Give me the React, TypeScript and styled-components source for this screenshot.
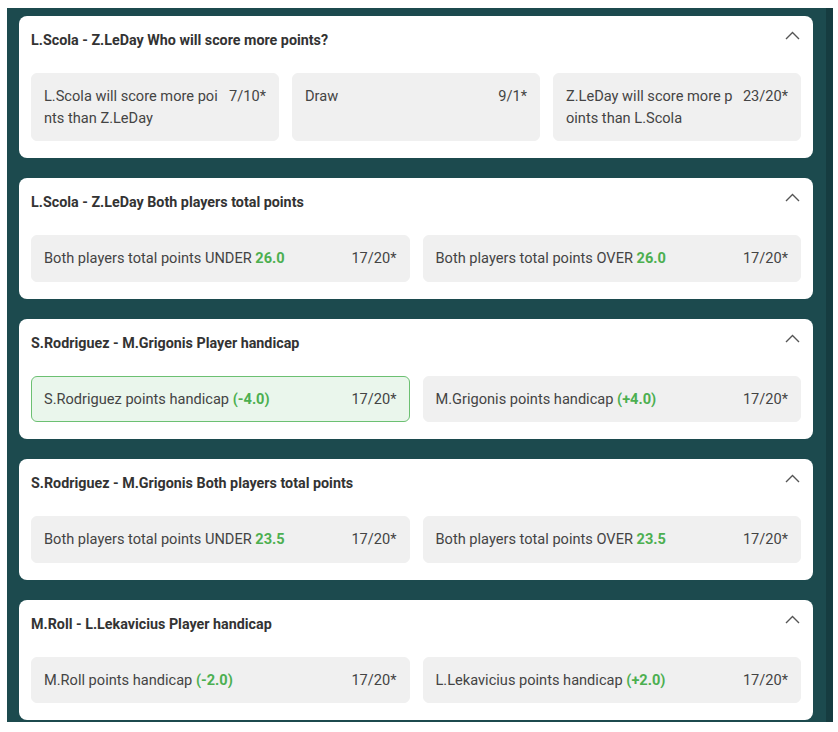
import React from 'react';
import styled, { createGlobalStyle } from 'styled-components';

// Types
interface Outcome {
  label: string;
  highlight?: string;
  odds: string;
  selected?: boolean;
}

interface Market {
  id: string;
  title: string;
  outcomes: Outcome[];
}

// Global
const GlobalStyle = createGlobalStyle`
  html, body {
    margin: 0;
    padding: 0;
    background: #ffffff;
    font-family: Roboto, "Liberation Sans", Arial, sans-serif;
  }
  * {
    box-sizing: border-box;
  }
`;

// Styled Components
const Page = styled.div`
  padding: 8px 5px 0 7px;
`;

const Panel = styled.div`
  display: flex;
  height: 714px;
  background-color: #1c4a4e;
  overflow: hidden;
`;

const MarketList = styled.div`
  flex: 1;
  display: flex;
  flex-direction: column;
  gap: 20px;
  padding: 8px 13px 0 12px;
`;

const ScrollTrack = styled.div`
  width: 7px;
  flex-shrink: 0;
  background-color: #163c40;
`;

const Card = styled.section`
  background-color: #ffffff;
  border-radius: 8px;
  padding: 0 12px 17px;
  flex-shrink: 0;
`;

const CardHeader = styled.header`
  display: flex;
  justify-content: space-between;
  align-items: flex-start;
  height: 57px;
  padding-top: 14px;
`;

const CardTitle = styled.h3`
  margin: 0;
  font-size: 14.3px;
  line-height: 20px;
  font-weight: 700;
  color: #333333;
`;

const Chevron = styled.svg`
  margin: 1px 1px 0 0;
  flex-shrink: 0;
`;

const OutcomeGrid = styled.div<{ $cols: number }>`
  display: grid;
  grid-template-columns: repeat(${p => p.$cols}, 1fr);
  gap: 13px;
`;

const OutcomeButton = styled.button<{ $selected?: boolean }>`
  display: flex;
  align-items: flex-start;
  gap: 10px;
  padding: 12px 12px 11px;
  border-radius: 6px;
  border: 1px solid ${p => (p.$selected ? '#6cc072' : '#f0f0f0')};
  background-color: ${p => (p.$selected ? '#eaf6ec' : '#f0f0f0')};
  font-family: inherit;
  font-size: 14.6px;
  line-height: 21.5px;
  color: #444444;
  text-align: left;
  cursor: pointer;
`;

const OutcomeLabel = styled.span`
  flex: 1;
  min-width: 0;
  word-break: break-all;
`;

const Highlight = styled.span`
  color: #4caf50;
  font-weight: 700;
`;

const Odds = styled.span`
  flex-shrink: 0;
  white-space: nowrap;
`;

const markets: Market[] = [
  {
    id: 'm1',
    title: 'L.Scola - Z.LeDay Who will score more points?',
    outcomes: [
      { label: 'L.Scola will score more points than Z.LeDay', odds: '7/10*' },
      { label: 'Draw', odds: '9/1*' },
      { label: 'Z.LeDay will score more points than L.Scola', odds: '23/20*' },
    ],
  },
  {
    id: 'm2',
    title: 'L.Scola - Z.LeDay Both players total points',
    outcomes: [
      { label: 'Both players total points UNDER ', highlight: '26.0', odds: '17/20*' },
      { label: 'Both players total points OVER ', highlight: '26.0', odds: '17/20*' },
    ],
  },
  {
    id: 'm3',
    title: 'S.Rodriguez - M.Grigonis Player handicap',
    outcomes: [
      { label: 'S.Rodriguez points handicap ', highlight: '(-4.0)', odds: '17/20*', selected: true },
      { label: 'M.Grigonis points handicap ', highlight: '(+4.0)', odds: '17/20*' },
    ],
  },
  {
    id: 'm4',
    title: 'S.Rodriguez - M.Grigonis Both players total points',
    outcomes: [
      { label: 'Both players total points UNDER ', highlight: '23.5', odds: '17/20*' },
      { label: 'Both players total points OVER ', highlight: '23.5', odds: '17/20*' },
    ],
  },
  {
    id: 'm5',
    title: 'M.Roll - L.Lekavicius Player handicap',
    outcomes: [
      { label: 'M.Roll points handicap ', highlight: '(-2.0)', odds: '17/20*' },
      { label: 'L.Lekavicius points handicap ', highlight: '(+2.0)', odds: '17/20*' },
    ],
  },
];

const App: React.FC = () => {
  return (
    <Page>
      <GlobalStyle />
      <Panel>
        <MarketList>
          {markets.map(market => (
            <Card key={market.id}>
              <CardHeader>
                <CardTitle>{market.title}</CardTitle>
                <Chevron width="15" height="9" viewBox="0 0 15 9" fill="none">
                  <polyline points="1,8 7.5,1.5 14,8" stroke="#555555" strokeWidth="1.4" />
                </Chevron>
              </CardHeader>
              <OutcomeGrid $cols={market.outcomes.length}>
                {market.outcomes.map((o, i) => (
                  <OutcomeButton key={i} $selected={o.selected}>
                    <OutcomeLabel>
                      {o.label}
                      {o.highlight && <Highlight>{o.highlight}</Highlight>}
                    </OutcomeLabel>
                    <Odds>{o.odds}</Odds>
                  </OutcomeButton>
                ))}
              </OutcomeGrid>
            </Card>
          ))}
        </MarketList>
        <ScrollTrack />
      </Panel>
    </Page>
  );
};

export default App;
